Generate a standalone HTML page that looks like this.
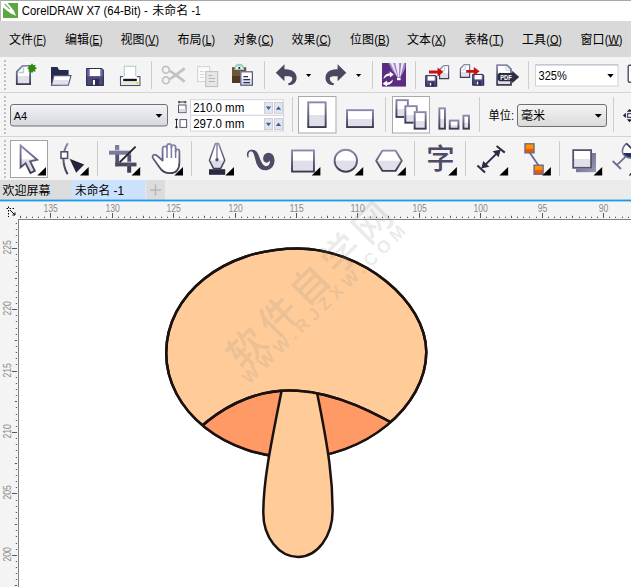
<!DOCTYPE html>
<html lang="zh"><head><meta charset="utf-8"><title>CorelDRAW X7</title>
<style>html,body{margin:0;padding:0;background:#fff;overflow:hidden}svg{display:block}</style></head>
<body><svg width="631" height="587" viewBox="0 0 631 587">
<rect x="0" y="0" width="631" height="587" fill="#ffffff"/>
<rect x="0" y="0" width="631" height="21" fill="#ffffff"/>
<rect x="0" y="0" width="631" height="1" fill="#a8a8a8"/>
<rect x="0" y="0" width="1" height="21" fill="#b8b8b8"/>
<rect x="0" y="21" width="631" height="36" fill="#d9d9d9"/>
<rect x="0" y="57" width="631" height="123" fill="#f4f4f4"/>
<rect x="0" y="92" width="631" height="1" fill="#d4d4d4"/>
<rect x="0" y="136" width="631" height="1" fill="#d4d4d4"/>
<rect x="0" y="180" width="631" height="20" fill="#ebebeb"/>
<rect x="0" y="201" width="631" height="18" fill="#f4f4f4"/>
<rect x="0" y="201" width="18" height="386" fill="#f4f4f4"/>
<rect x="18" y="219" width="613" height="1" fill="#808080"/>
<rect x="18" y="219" width="1" height="368" fill="#808080"/>
<rect x="3" y="3" width="15" height="15" fill="#5aa843"/>
<path d="M3,3 L7.6,3 L10.6,6.8 L13.8,10.6 L16,15.8 L10.8,13.6 L6.8,10.4 L3,7.4 Z" fill="#fff"/>
<path d="M4.6,4.2 L9.6,8.8" stroke="#5aa843" stroke-width="1.1"/>
<text y="15" font-size="12" font-family="Liberation Sans, Noto Sans CJK SC, sans-serif" fill="#000"><tspan x="21.8" textLength="126" lengthAdjust="spacingAndGlyphs">CorelDRAW X7 (64-Bit) -</tspan><tspan x="152.3">未命名</tspan><tspan x="191.6" textLength="9" lengthAdjust="spacingAndGlyphs">-1</tspan></text>
<text y="43.5" font-size="12" font-family="Liberation Sans, Noto Sans CJK SC, sans-serif" fill="#000"><tspan x="9">文件</tspan><tspan x="33.3" font-size="12.4" textLength="12.7" lengthAdjust="spacingAndGlyphs">(<tspan text-decoration="underline">F</tspan>)</tspan></text>
<text y="43.5" font-size="12" font-family="Liberation Sans, Noto Sans CJK SC, sans-serif" fill="#000"><tspan x="65">编辑</tspan><tspan x="89.3" font-size="12.4" textLength="13.2" lengthAdjust="spacingAndGlyphs">(<tspan text-decoration="underline">E</tspan>)</tspan></text>
<text y="43.5" font-size="12" font-family="Liberation Sans, Noto Sans CJK SC, sans-serif" fill="#000"><tspan x="120.5">视图</tspan><tspan x="144.8" font-size="12.4" textLength="14.2" lengthAdjust="spacingAndGlyphs">(<tspan text-decoration="underline">V</tspan>)</tspan></text>
<text y="43.5" font-size="12" font-family="Liberation Sans, Noto Sans CJK SC, sans-serif" fill="#000"><tspan x="177.5">布局</tspan><tspan x="201.8" font-size="12.4" textLength="13.2" lengthAdjust="spacingAndGlyphs">(<tspan text-decoration="underline">L</tspan>)</tspan></text>
<text y="43.5" font-size="12" font-family="Liberation Sans, Noto Sans CJK SC, sans-serif" fill="#000"><tspan x="233.5">对象</tspan><tspan x="257.8" font-size="12.4" textLength="15.7" lengthAdjust="spacingAndGlyphs">(<tspan text-decoration="underline">C</tspan>)</tspan></text>
<text y="43.5" font-size="12" font-family="Liberation Sans, Noto Sans CJK SC, sans-serif" fill="#000"><tspan x="291.5">效果</tspan><tspan x="315.8" font-size="12.4" textLength="15.2" lengthAdjust="spacingAndGlyphs">(<tspan text-decoration="underline">C</tspan>)</tspan></text>
<text y="43.5" font-size="12" font-family="Liberation Sans, Noto Sans CJK SC, sans-serif" fill="#000"><tspan x="350">位图</tspan><tspan x="374.3" font-size="12.4" textLength="15.2" lengthAdjust="spacingAndGlyphs">(<tspan text-decoration="underline">B</tspan>)</tspan></text>
<text y="43.5" font-size="12" font-family="Liberation Sans, Noto Sans CJK SC, sans-serif" fill="#000"><tspan x="407">文本</tspan><tspan x="431.3" font-size="12.4" textLength="14.7" lengthAdjust="spacingAndGlyphs">(<tspan text-decoration="underline">X</tspan>)</tspan></text>
<text y="43.5" font-size="12" font-family="Liberation Sans, Noto Sans CJK SC, sans-serif" fill="#000"><tspan x="464.5">表格</tspan><tspan x="488.8" font-size="12.4" textLength="14.7" lengthAdjust="spacingAndGlyphs">(<tspan text-decoration="underline">T</tspan>)</tspan></text>
<text y="43.5" font-size="12" font-family="Liberation Sans, Noto Sans CJK SC, sans-serif" fill="#000"><tspan x="522">工具</tspan><tspan x="546.3" font-size="12.4" textLength="15.7" lengthAdjust="spacingAndGlyphs">(<tspan text-decoration="underline">O</tspan>)</tspan></text>
<text y="43.5" font-size="12" font-family="Liberation Sans, Noto Sans CJK SC, sans-serif" fill="#000"><tspan x="580.5">窗口</tspan><tspan x="604.8" font-size="12.4" textLength="17.7" lengthAdjust="spacingAndGlyphs">(<tspan text-decoration="underline">W</tspan>)</tspan></text>
<defs>
<linearGradient id="gO" x1="0" y1="0" x2="0" y2="1"><stop offset="0" stop-color="#8a89ae"/><stop offset="1" stop-color="#3c3b50"/></linearGradient>
<linearGradient id="gDD" x1="0" y1="0" x2="0" y2="1"><stop offset="0" stop-color="#f4f4f4"/><stop offset="1" stop-color="#dadada"/></linearGradient>
<linearGradient id="gDD2" x1="0" y1="0" x2="0" y2="1"><stop offset="0" stop-color="#f4f5f8"/><stop offset="0.5" stop-color="#e3e5ea"/><stop offset="1" stop-color="#d6d8de"/></linearGradient>
<linearGradient id="gOr" x1="0" y1="0" x2="0" y2="1"><stop offset="0" stop-color="#ff9a00"/><stop offset="0.55" stop-color="#ff8a00"/><stop offset="0.56" stop-color="#f25a00"/><stop offset="1" stop-color="#f05000"/></linearGradient>
<linearGradient id="gSh" x1="0" y1="0" x2="1" y2="1"><stop offset="0" stop-color="#5a5a80"/><stop offset="1" stop-color="#9a9ab8"/></linearGradient>
<filter id="blur1" x="-20%" y="-20%" width="140%" height="140%"><feGaussianBlur stdDeviation="0.7"/></filter>
</defs>
<rect x="4" y="60" width="2" height="2" fill="#d2d2d2"/><rect x="4" y="61" width="1" height="1" fill="#a6a6a6"/><rect x="5" y="60" width="1" height="1" fill="#bcbcbc"/>
<rect x="4" y="64" width="2" height="2" fill="#d2d2d2"/><rect x="4" y="65" width="1" height="1" fill="#a6a6a6"/><rect x="5" y="64" width="1" height="1" fill="#bcbcbc"/>
<rect x="4" y="68" width="2" height="2" fill="#d2d2d2"/><rect x="4" y="69" width="1" height="1" fill="#a6a6a6"/><rect x="5" y="68" width="1" height="1" fill="#bcbcbc"/>
<rect x="4" y="72" width="2" height="2" fill="#d2d2d2"/><rect x="4" y="73" width="1" height="1" fill="#a6a6a6"/><rect x="5" y="72" width="1" height="1" fill="#bcbcbc"/>
<rect x="4" y="76" width="2" height="2" fill="#d2d2d2"/><rect x="4" y="77" width="1" height="1" fill="#a6a6a6"/><rect x="5" y="76" width="1" height="1" fill="#bcbcbc"/>
<rect x="4" y="80" width="2" height="2" fill="#d2d2d2"/><rect x="4" y="81" width="1" height="1" fill="#a6a6a6"/><rect x="5" y="80" width="1" height="1" fill="#bcbcbc"/>
<rect x="4" y="84" width="2" height="2" fill="#d2d2d2"/><rect x="4" y="85" width="1" height="1" fill="#a6a6a6"/><rect x="5" y="84" width="1" height="1" fill="#bcbcbc"/>
<rect x="4" y="88" width="2" height="2" fill="#d2d2d2"/><rect x="4" y="89" width="1" height="1" fill="#a6a6a6"/><rect x="5" y="88" width="1" height="1" fill="#bcbcbc"/>
<path d="M22.5,65.8 L30.2,65.8 L30.2,84.3 L16.7,84.3 L16.7,71.6 Z" fill="#fff"/>
<rect x="16.7" y="76" width="13.5" height="8.3" fill="#e0e0ea"/>
<path d="M23.4,67.4 L23.4,72.4 L18.4,72.4" fill="none" stroke="#b4d2cd" stroke-width="1.5"/>
<path d="M22.5,65.9 L30.1,65.9 L30.1,84.2 L16.8,84.2 L16.8,71.6 Z" fill="none" stroke="url(#gO)" stroke-width="1.8"/>
<polygon points="32.00,63.20 33.26,65.15 35.54,64.66 35.05,66.94 37.00,68.20 35.05,69.46 35.54,71.74 33.26,71.25 32.00,73.20 30.74,71.25 28.46,71.74 28.95,69.46 27.00,68.20 28.95,66.94 28.46,64.66 30.74,65.15" fill="#2d8c0c"/>
<path d="M51,67 L57.6,67 L58.8,70 L68.6,70 L68.6,76 L51,85.6 Z" fill="#252c52"/>
<path d="M51,67 L51,85.6 L60,85.6 L60,70 Z" fill="#252c52"/>
<path d="M54,75.6 L71,75.6 L68.4,85.3 L51.4,85.3 Z" fill="#fff"/>
<path d="M52.8,80 L69.8,80 L68.4,85.3 L51.4,85.3 Z" fill="#e0e0ea"/>
<path d="M54,75.6 L71,75.6 L68.4,85.3 L51.4,85.3 Z" fill="none" stroke="#55557a" stroke-width="1.1"/>
<path d="M86.2,68 L101.68800000000002,68 L103.80000000000001,70.112 L103.80000000000001,85.8 L86.2,85.8 Z" fill="#6a68a6"/>
<path d="M86.2,76.366 L103.80000000000001,76.366 L103.80000000000001,85.8 L86.2,85.8 Z" fill="#4b4a78"/>
<rect x="89.72" y="68.6" width="10.56" height="7.476" fill="#fff"/>
<rect x="91.83200000000001" y="79.036" width="7.040000000000001" height="6.764" fill="#2a2c52"/>
<rect x="92.888" y="79.926" width="2.112" height="5.34" fill="#fff"/>
<path d="M86.7,68.5 L101.68800000000002,68.5 L103.30000000000001,70.112 L103.30000000000001,85.3 L86.7,85.3 Z" fill="none" stroke="#2a2c52" stroke-width="1"/>
<rect x="124.3" y="66.3" width="11.4" height="12" fill="#fff" stroke="#a9cfc9" stroke-width="1"/>
<rect x="120.5" y="76.6" width="19.4" height="8.9" fill="#fff" stroke="#4b4a7c" stroke-width="1.1"/>
<rect x="123.2" y="76" width="13.6" height="3" fill="#fff"/>
<rect x="123.2" y="78.8" width="13.6" height="2.4" fill="#15151f"/>
<rect x="121.2" y="81.6" width="18" height="3.3" fill="#e9e9cd"/>
<rect x="136.4" y="82" width="1.8" height="1.8" fill="#f2d400"/>
<rect x="151" y="61" width="1" height="28" fill="#cdcdcd"/>
<g fill="none" stroke="#c2c2c2" stroke-width="1.7"><circle cx="165.9" cy="69.8" r="3.4"/><circle cx="165.9" cy="80.3" r="3.4"/></g>
<path d="M168.4,78.6 L173,75.6 L183.8,67.2 L185.6,69.6 L175.4,77 L169.8,80.6 Z" fill="#c2c2c2"/>
<path d="M168.4,71.4 L173,74.4 L183.8,82.8 L185.6,80.4 L175.4,73 L169.8,69.4 Z" fill="#c2c2c2"/>
<rect x="197.7" y="66.6" width="12" height="15" fill="#fbfbfb" stroke="#d2d2d2" stroke-width="1"/>
<path d="M200,71.5h4 M200,74.5h4 M200,77.5h4" stroke="#d6d6d6" stroke-width="1"/>
<rect x="205.7" y="71.6" width="12" height="15" fill="#e6e6e6" stroke="#bcbcbc" stroke-width="1"/>
<path d="M208.5,75.5h4 M208.5,78.5h6.5 M208.5,81.5h6.5" stroke="#b4b4b4" stroke-width="1"/>
<path d="M235,69 Q235,64.4 239.3,64.4 Q243.6,64.4 243.6,69 Z" fill="#fff" stroke="#9ccdc4" stroke-width="1.2"/>
<rect x="232" y="67.2" width="14.2" height="8" fill="#6b5637"/>
<rect x="232" y="75.2" width="14.2" height="7.8" fill="#4e3921"/>
<path d="M235,69.4 Q235,65.6 239.3,65.6 Q243.6,65.6 243.6,69.4 Z" fill="#fff" stroke="#9ccdc4" stroke-width="1.2"/>
<rect x="238.4" y="67" width="1.8" height="1.8" fill="#1a1a30"/>
<rect x="240.2" y="71.2" width="12.800000000000011" height="14.599999999999994" fill="#fff"/>
<rect x="240.2" y="78.5" width="12.800000000000011" height="7.299999999999997" fill="#e0e0ea"/>
<rect x="240.79999999999998" y="71.8" width="11.600000000000012" height="13.399999999999995" fill="none" stroke="#55557c" stroke-width="1.2"/>
<path d="M243.4,76.6h4.6 M243.4,79.6h6.6 M243.4,82.6h6.6" stroke="#2a2c52" stroke-width="1.3"/>
<rect x="264" y="61" width="1" height="28" fill="#cdcdcd"/>
<path d="M275.8,72.8 L284.5,64.3 L284.5,69.2 C292.5,68.8 296.6,72.6 296.6,77.8 C296.6,82.6 293,85.3 288.6,85.3 L288,83.6 C290.8,82.6 292.3,80.8 292.3,78.8 C292.3,76.4 290,76.2 284.5,76.3 L284.5,81.3 Z" fill="#4a485f"/>
<path d="M275.8,72.8 L284.5,64.3 L284.5,69.2 C292.5,68.8 296.6,72.6 296.6,77.8 C296.6,82.6 293,85.3 288.6,85.3 L288,83.6 C290.8,82.6 292.3,80.8 292.3,78.8 C292.3,76.4 290,76.2 284.5,76.3 L284.5,81.3 Z" fill="#4a485f" transform="translate(622.1,0) scale(-1,1)"/>
<path d="M306,74 L311.2,74 L308.6,77 Z" fill="#000"/>
<path d="M356,74 L361.2,74 L358.6,77 Z" fill="#000"/>
<rect x="372" y="61" width="1" height="28" fill="#cdcdcd"/>
<rect x="382" y="63" width="24" height="23.6" fill="#5a2d82"/>
<clipPath id="pc"><rect x="382" y="63" width="24" height="23.6"/></clipPath>
<g clip-path="url(#pc)"><path d="M388.5,63 L405.5,63 Q406,70 400.2,77 L397.2,77 Q391,70 388.5,63 Z" fill="#9f86c2"/><path d="M390.5,63 L393.2,63 L397.6,77 L397.2,77 Z M395.2,63 L399.2,63 L399,77 L398.3,77 Z M401.4,63 L404,63 L400.2,77 L399.6,77 Z" fill="#efe8f6"/><rect x="397" y="77.6" width="3.6" height="2.6" fill="#fff"/><path d="M383.4,79 Q384,73.6 389.8,73.2 L389.6,71.2 L393.8,74.4 L390,77.6 L389.9,75.6 Q386,75.8 383.4,79 Z" fill="#fff"/><path d="M393,79.6 Q392.4,84.6 387,85 L387.2,86.6 L382.6,83.8 L386.8,80.6 L386.9,82.6 Q390.4,82.4 393,79.6 Z" fill="#fff"/></g>
<rect x="415" y="61" width="1" height="28" fill="#cdcdcd"/>
<path d="M425.3,75.2 L435.684,75.2 L437.1,76.616 L437.1,86.60000000000001 L425.3,86.60000000000001 Z" fill="#6a68a6"/>
<path d="M425.3,80.558 L437.1,80.558 L437.1,86.60000000000001 L425.3,86.60000000000001 Z" fill="#4b4a78"/>
<rect x="427.66" y="75.8" width="7.08" height="4.788" fill="#fff"/>
<rect x="429.076" y="82.268" width="4.720000000000001" height="4.332" fill="#2a2c52"/>
<rect x="429.784" y="82.83800000000001" width="1.416" height="3.42" fill="#fff"/>
<path d="M425.8,75.7 L435.684,75.7 L436.6,76.616 L436.6,86.10000000000001 L425.8,86.10000000000001 Z" fill="none" stroke="#2a2c52" stroke-width="1"/>
<path d="M443.6,65.6 L448.6,65.6 L448.6,78.6 L439.6,78.6 L439.6,69.8 Z" fill="#fff"/>
<rect x="439.6" y="73" width="9" height="5.6" fill="#e0e0ea"/>
<path d="M444.6,66.6 L444.6,70.8 L440.6,70.8" fill="none" stroke="#b4d2cd" stroke-width="1"/>
<path d="M443.6,65.6 L448.6,65.6 L448.6,78.6 L439.6,78.6 L439.6,69.8 Z" fill="none" stroke="url(#gO)" stroke-width="1.2"/>
<path d="M429,70.6 L437.6,70.6 L437.6,67.6 L443.4,72 L437.6,76.4 L437.6,73.5 L429,73.5 Z" fill="#c8100e"/>
<path d="M464.2,64.6 L469.6,64.6 L469.6,77.4 L460.4,77.4 L460.4,68.6 Z" fill="#fff"/>
<rect x="460.4" y="72" width="9.2" height="5.4" fill="#e0e0ea"/>
<path d="M465.2,65.6 L465.2,69.8 L461.4,69.8" fill="none" stroke="#b4d2cd" stroke-width="1"/>
<path d="M464.2,64.6 L469.6,64.6 L469.6,77.4 L460.4,77.4 L460.4,68.6 Z" fill="none" stroke="url(#gO)" stroke-width="1.2"/>
<path d="M472.3,73.9 L482.684,73.9 L484.1,75.316 L484.1,85.5 L472.3,85.5 Z" fill="#6a68a6"/>
<path d="M472.3,79.352 L484.1,79.352 L484.1,85.5 L472.3,85.5 Z" fill="#4b4a78"/>
<rect x="474.66" y="74.5" width="7.08" height="4.872" fill="#fff"/>
<rect x="476.076" y="81.09200000000001" width="4.720000000000001" height="4.4079999999999995" fill="#2a2c52"/>
<rect x="476.784" y="81.67200000000001" width="1.416" height="3.48" fill="#fff"/>
<path d="M472.8,74.4 L482.684,74.4 L483.6,75.316 L483.6,85.0 L472.8,85.0 Z" fill="none" stroke="#2a2c52" stroke-width="1"/>
<path d="M466.2,69.9 L473.8,69.9 L473.8,66.9 L479.6,71.3 L473.8,75.7 L473.8,72.8 L466.2,72.8 Z" fill="#c8100e"/>
<path d="M496.9,64.9 L507,64.9 L511.2,69.2 L511.2,85 L496.9,85 Z" fill="#fff"/>
<rect x="496.9" y="76" width="14.3" height="9" fill="#e0e0ea"/>
<path d="M506,66 L506,70.2 L510.2,70.2" fill="none" stroke="#b4d2cd" stroke-width="1"/>
<path d="M497.1,65.1 L507,65.1 L511,69.2 L511,84.8 L497.1,84.8 Z" fill="none" stroke="url(#gO)" stroke-width="1.8"/>
<path d="M497.4,77 Q497.6,72.4 501,72.9 L512.2,72.9 L512.2,70.8 L519.2,77 L512.2,83.2 L512.2,81.3 L501,81.3 Q497.6,81.6 497.4,77 Z" fill="#2e2c44"/>
<text x="500.2" y="80.2" font-size="7.6" font-weight="bold" font-family="Liberation Sans, Noto Sans CJK SC, sans-serif" fill="#fff" textLength="11.6" lengthAdjust="spacingAndGlyphs">PDF</text>
<rect x="528" y="61" width="1" height="28" fill="#cdcdcd"/>
<rect x="535.5" y="64.5" width="82.5" height="21.5" fill="#fff" stroke="#d0d2dc" stroke-width="1"/>
<rect x="535.5" y="64.5" width="82.5" height="1" fill="#b8bac8"/>
<text x="538.6" y="80" font-size="12" font-family="Liberation Sans, Noto Sans CJK SC, sans-serif" fill="#000" textLength="28.2" lengthAdjust="spacingAndGlyphs">325%</text>
<path d="M607.3,74 L613.7,74 L610.5,77.8 Z" fill="#000"/>
<rect x="628.2" y="65.2" width="8" height="17" rx="1.5" fill="#fff" stroke="#4a4a6a" stroke-width="1.4"/>
<rect x="4" y="96" width="2" height="2" fill="#d2d2d2"/><rect x="4" y="97" width="1" height="1" fill="#a6a6a6"/><rect x="5" y="96" width="1" height="1" fill="#bcbcbc"/>
<rect x="4" y="100" width="2" height="2" fill="#d2d2d2"/><rect x="4" y="101" width="1" height="1" fill="#a6a6a6"/><rect x="5" y="100" width="1" height="1" fill="#bcbcbc"/>
<rect x="4" y="104" width="2" height="2" fill="#d2d2d2"/><rect x="4" y="105" width="1" height="1" fill="#a6a6a6"/><rect x="5" y="104" width="1" height="1" fill="#bcbcbc"/>
<rect x="4" y="108" width="2" height="2" fill="#d2d2d2"/><rect x="4" y="109" width="1" height="1" fill="#a6a6a6"/><rect x="5" y="108" width="1" height="1" fill="#bcbcbc"/>
<rect x="4" y="112" width="2" height="2" fill="#d2d2d2"/><rect x="4" y="113" width="1" height="1" fill="#a6a6a6"/><rect x="5" y="112" width="1" height="1" fill="#bcbcbc"/>
<rect x="4" y="116" width="2" height="2" fill="#d2d2d2"/><rect x="4" y="117" width="1" height="1" fill="#a6a6a6"/><rect x="5" y="116" width="1" height="1" fill="#bcbcbc"/>
<rect x="4" y="120" width="2" height="2" fill="#d2d2d2"/><rect x="4" y="121" width="1" height="1" fill="#a6a6a6"/><rect x="5" y="120" width="1" height="1" fill="#bcbcbc"/>
<rect x="4" y="124" width="2" height="2" fill="#d2d2d2"/><rect x="4" y="125" width="1" height="1" fill="#a6a6a6"/><rect x="5" y="124" width="1" height="1" fill="#bcbcbc"/>
<rect x="4" y="128" width="2" height="2" fill="#d2d2d2"/><rect x="4" y="129" width="1" height="1" fill="#a6a6a6"/><rect x="5" y="128" width="1" height="1" fill="#bcbcbc"/>
<rect x="4" y="132" width="2" height="2" fill="#d2d2d2"/><rect x="4" y="133" width="1" height="1" fill="#a6a6a6"/><rect x="5" y="132" width="1" height="1" fill="#bcbcbc"/>
<rect x="10.5" y="104.5" width="157" height="21.5" rx="2.5" fill="url(#gDD2)" stroke="#707070" stroke-width="1"/>
<text x="13.8" y="119.8" font-size="11.6" font-family="Liberation Sans, Noto Sans CJK SC, sans-serif" fill="#000" textLength="13.4" lengthAdjust="spacingAndGlyphs">A4</text>
<path d="M155.6,114 L162.4,114 L159,117.8 Z" fill="#000"/>
<path d="M178,102h8.4 M179.2,101v2.4 M185.2,101v2.4" stroke="#2a2a3a" stroke-width="1"/>
<rect x="178.5" y="105" width="7.5" height="7.6" fill="#fff" stroke="#55556a" stroke-width="1"/>
<rect x="179" y="109" width="6.5" height="3.2" fill="#dcdce8"/>
<path d="M176.5,118.6v9.6 M175,119.6h3 M175,127.2h3" stroke="#2a2a3a" stroke-width="1"/>
<rect x="180" y="119.6" width="6.6" height="7.8" fill="#fff" stroke="#55556a" stroke-width="1"/>
<rect x="190.5" y="99.7" width="93" height="15.6" fill="#fff" stroke="#d4d6de" stroke-width="1"/>
<text x="193.2" y="112" font-size="12" font-family="Liberation Sans, Noto Sans CJK SC, sans-serif" fill="#000" textLength="51" lengthAdjust="spacingAndGlyphs">210.0 mm</text>
<rect x="190.5" y="115.4" width="93" height="15.6" fill="#fff" stroke="#d4d6de" stroke-width="1"/>
<text x="193.2" y="128" font-size="12" font-family="Liberation Sans, Noto Sans CJK SC, sans-serif" fill="#000" textLength="51" lengthAdjust="spacingAndGlyphs">297.0 mm</text>
<rect x="264.5" y="102.3" width="8" height="11" fill="#e4e5ea" stroke="#c4c6d0" stroke-width="0.8"/>
<rect x="274.5" y="102.3" width="8" height="11" fill="#e4e5ea" stroke="#c4c6d0" stroke-width="0.8"/>
<path d="M265.9,106.5 L271.1,106.5 L268.5,109.89999999999999 Z" fill="#3b5cb0"/>
<path d="M275.9,109.7 L281.1,109.7 L278.5,106.3 Z" fill="#3b5cb0"/>
<rect x="264.5" y="118.6" width="8" height="11" fill="#e4e5ea" stroke="#c4c6d0" stroke-width="0.8"/>
<rect x="274.5" y="118.6" width="8" height="11" fill="#e4e5ea" stroke="#c4c6d0" stroke-width="0.8"/>
<path d="M265.9,122.8 L271.1,122.8 L268.5,126.19999999999999 Z" fill="#3b5cb0"/>
<path d="M275.9,126.0 L281.1,126.0 L278.5,122.6 Z" fill="#3b5cb0"/>
<rect x="292" y="97" width="1" height="35" fill="#cdcdcd"/>
<rect x="298.5" y="96.5" width="37.5" height="36.5" fill="#fff" stroke="#a9a9a9" stroke-width="1"/>
<rect x="307.3" y="101.4" width="19.30000000000001" height="26.599999999999994" fill="#fff"/>
<rect x="307.3" y="115" width="19.30000000000001" height="13" fill="#e0e0ea"/>
<rect x="308.25" y="102.35000000000001" width="17.400000000000013" height="24.699999999999996" fill="none" stroke="url(#gO)" stroke-width="1.9"/>
<rect x="346.1" y="109.2" width="27.799999999999955" height="18.799999999999997" fill="#fff"/>
<rect x="346.1" y="119" width="27.799999999999955" height="9" fill="#e0e0ea"/>
<rect x="347.05" y="110.15" width="25.899999999999956" height="16.9" fill="none" stroke="url(#gO)" stroke-width="1.9"/>
<rect x="385" y="97" width="1" height="35" fill="#cdcdcd"/>
<rect x="392.5" y="96.5" width="37" height="36.5" fill="#fff" stroke="#a9a9a9" stroke-width="1"/>
<rect x="395.5" y="99.2" width="13.300000000000011" height="18.700000000000003" fill="#fff"/>
<rect x="395.5" y="109" width="13.300000000000011" height="8.900000000000006" fill="#e0e0ea"/>
<rect x="396.45" y="100.15" width="11.400000000000011" height="16.800000000000004" fill="none" stroke="url(#gO)" stroke-width="1.9"/>
<rect x="404.4" y="105.2" width="13.300000000000011" height="18.39999999999999" fill="#fff"/>
<rect x="404.4" y="115" width="13.300000000000011" height="8.599999999999994" fill="#e0e0ea"/>
<rect x="405.34999999999997" y="106.15" width="11.400000000000011" height="16.499999999999993" fill="none" stroke="url(#gO)" stroke-width="1.9"/>
<rect x="413.7" y="111.2" width="12.900000000000034" height="18.39999999999999" fill="#fff"/>
<rect x="413.7" y="121" width="12.900000000000034" height="8.599999999999994" fill="#e0e0ea"/>
<rect x="414.65" y="112.15" width="11.000000000000034" height="16.499999999999993" fill="none" stroke="url(#gO)" stroke-width="1.9"/>
<rect x="438.4" y="107.4" width="7.5" height="22.19999999999999" fill="#fff"/>
<rect x="438.4" y="119" width="7.5" height="10.599999999999994" fill="#e0e0ea"/>
<rect x="439.34999999999997" y="108.35000000000001" width="5.6" height="20.29999999999999" fill="none" stroke="url(#gO)" stroke-width="1.9"/>
<rect x="448.8" y="119.6" width="10.599999999999966" height="10.0" fill="#fff"/>
<rect x="448.8" y="125" width="10.599999999999966" height="4.599999999999994" fill="#e0e0ea"/>
<rect x="449.75" y="120.55" width="8.699999999999966" height="8.1" fill="none" stroke="url(#gO)" stroke-width="1.9"/>
<rect x="462.5" y="114.7" width="7.399999999999977" height="14.899999999999991" fill="#fff"/>
<rect x="462.5" y="122.5" width="7.399999999999977" height="7.099999999999994" fill="#e0e0ea"/>
<rect x="463.45" y="115.65" width="5.499999999999977" height="12.999999999999991" fill="none" stroke="url(#gO)" stroke-width="1.9"/>
<rect x="479" y="97" width="1" height="35" fill="#cdcdcd"/>
<text x="488.6" y="120" font-size="12" font-family="Liberation Sans, Noto Sans CJK SC, sans-serif" fill="#000" textLength="25.6" lengthAdjust="spacingAndGlyphs">单位:</text>
<rect x="517.5" y="104.5" width="89" height="22" rx="2.5" fill="url(#gDD)" stroke="#707070" stroke-width="1"/>
<text x="521" y="120" font-size="12" font-family="Liberation Sans, Noto Sans CJK SC, sans-serif" fill="#000">毫米</text>
<path d="M594.8,114 L601.9,114 L598.3,117.8 Z" fill="#000"/>
<rect x="613" y="97" width="1" height="35" fill="#cdcdcd"/>
<path d="M622.9,115.4 L625.9,112.8 L625.9,118 Z" fill="#1e1d30"/>
<rect x="627.6" y="113.6" width="8" height="3.8" fill="#fff" stroke="#4a4a6a" stroke-width="1.3"/>
<path d="M629.6,108.9 L626.8,111.7 L632.4,111.7 Z M629.6,122.2 L626.8,119.2 L632.4,119.2 Z" fill="#1e1d30"/>
<rect x="4" y="140" width="2" height="2" fill="#d2d2d2"/><rect x="4" y="141" width="1" height="1" fill="#a6a6a6"/><rect x="5" y="140" width="1" height="1" fill="#bcbcbc"/>
<rect x="4" y="144" width="2" height="2" fill="#d2d2d2"/><rect x="4" y="145" width="1" height="1" fill="#a6a6a6"/><rect x="5" y="144" width="1" height="1" fill="#bcbcbc"/>
<rect x="4" y="148" width="2" height="2" fill="#d2d2d2"/><rect x="4" y="149" width="1" height="1" fill="#a6a6a6"/><rect x="5" y="148" width="1" height="1" fill="#bcbcbc"/>
<rect x="4" y="152" width="2" height="2" fill="#d2d2d2"/><rect x="4" y="153" width="1" height="1" fill="#a6a6a6"/><rect x="5" y="152" width="1" height="1" fill="#bcbcbc"/>
<rect x="4" y="156" width="2" height="2" fill="#d2d2d2"/><rect x="4" y="157" width="1" height="1" fill="#a6a6a6"/><rect x="5" y="156" width="1" height="1" fill="#bcbcbc"/>
<rect x="4" y="160" width="2" height="2" fill="#d2d2d2"/><rect x="4" y="161" width="1" height="1" fill="#a6a6a6"/><rect x="5" y="160" width="1" height="1" fill="#bcbcbc"/>
<rect x="4" y="164" width="2" height="2" fill="#d2d2d2"/><rect x="4" y="165" width="1" height="1" fill="#a6a6a6"/><rect x="5" y="164" width="1" height="1" fill="#bcbcbc"/>
<rect x="4" y="168" width="2" height="2" fill="#d2d2d2"/><rect x="4" y="169" width="1" height="1" fill="#a6a6a6"/><rect x="5" y="168" width="1" height="1" fill="#bcbcbc"/>
<rect x="4" y="172" width="2" height="2" fill="#d2d2d2"/><rect x="4" y="173" width="1" height="1" fill="#a6a6a6"/><rect x="5" y="172" width="1" height="1" fill="#bcbcbc"/>
<rect x="4" y="176" width="2" height="2" fill="#d2d2d2"/><rect x="4" y="177" width="1" height="1" fill="#a6a6a6"/><rect x="5" y="176" width="1" height="1" fill="#bcbcbc"/>
<rect x="10.5" y="140.5" width="37" height="37" fill="#fff" stroke="#a4a4a4" stroke-width="1"/>
<path d="M20.6,145.6 L20.6,167.2 L25.6,163.2 L30.4,173 L34.8,170.8 L30.2,161.4 L37.2,159.8 Z" fill="#fff"/>
<clipPath id="arwc"><path d="M20.6,145.6 L20.6,167.2 L25.6,163.2 L30.4,173 L34.8,170.8 L30.2,161.4 L37.2,159.8 Z"/></clipPath>
<rect x="20" y="159.4" width="18" height="14" fill="#dcdce8" clip-path="url(#arwc)"/>
<path d="M20.6,145.6 L20.6,167.2 L25.6,163.2 L30.4,173 L34.8,170.8 L30.2,161.4 L37.2,159.8 Z" fill="none" stroke="url(#gO)" stroke-width="1.9" stroke-linejoin="miter"/>
<path d="M46,166.9 L46,175.6 L37.3,175.6 Z" fill="#000"/>
<path d="M67.8,143.2 Q63.4,150 63.4,158.6 Q63.4,167 67.6,174.2" fill="none" stroke="url(#gO)" stroke-width="2"/>
<rect x="61" y="151.8" width="6.6" height="6.6" fill="#fff" stroke="#4a4a62" stroke-width="1.5"/>
<path d="M69.6,158.8 L84.2,164.6 L76.2,172.8 Z" fill="#25243c"/>
<path d="M88.7,166.9 L88.7,175.6 L80.0,175.6 Z" fill="#000"/>
<rect x="97" y="141" width="1" height="35" fill="#cdcdcd"/>
<rect x="115.3" y="145.2" width="3.8" height="21" fill="#55536c"/>
<rect x="115.3" y="145.2" width="3.8" height="5.5" fill="#7e7d9e"/>
<rect x="115.3" y="162.6" width="21.2" height="3.8" fill="#4b4960"/>
<rect x="109" y="150.7" width="22.1" height="4" fill="#7a799a"/>
<rect x="127.4" y="154.7" width="3.7" height="17.8" fill="#55536c"/>
<rect x="127.4" y="166.4" width="3.7" height="6.1" fill="#3e3d52"/>
<rect x="115.3" y="149.8" width="3.8" height="1" fill="#a8d4cc"/><rect x="127.4" y="161.6" width="3.7" height="1" fill="#a8d4cc"/>
<path d="M135.6,146.6 L119.6,162.4" stroke="#1e1d2c" stroke-width="1.8"/>
<path d="M140.2,166.9 L140.2,175.6 L131.5,175.6 Z" fill="#000"/>
<path d="M162.6,160.6 L162.6,148.6 Q162.6,146.4 164.8,146.4 Q167,146.4 167,148.6 L167,146.2 Q167,144 169.2,144 Q171.4,144 171.4,146.2 L171.4,147.4 Q171.4,145.2 173.5,145.2 Q175.6,145.2 175.6,147.4 L175.6,151.4 Q175.6,149.4 177.5,149.4 Q179.4,149.4 179.4,151.6 L179.4,162 Q179.4,173.2 170,173.2 Q163.4,173.2 159.6,167.4 L153.2,158.4 Q151.8,156 153.6,155 Q155.6,154.2 157.4,156 Z" fill="#fff" stroke="url(#gO)" stroke-width="1.8" stroke-linejoin="round"/>
<path d="M167,148.4 V158 M171.4,147 V158 M175.6,151 V158" stroke="#7a7a9c" stroke-width="1.5" fill="none"/>
<path d="M183,166.9 L183,175.6 L174.3,175.6 Z" fill="#000"/>
<rect x="191" y="141" width="1" height="35" fill="#cdcdcd"/>
<path d="M215.4,143.4 L218.6,143.4 L224.8,160.4 L220.6,168.6 L213.6,168.6 L209.4,160.4 Z" fill="#fff"/>
<path d="M209.6,160.4 L224.6,160.4 L220.6,168.6 L213.6,168.6 Z" fill="#dcdce8"/>
<path d="M215.4,143.4 L218.6,143.4 L224.8,160.4 L220.6,168.6 L213.6,168.6 L209.4,160.4 Z" fill="none" stroke="url(#gO)" stroke-width="1.5" stroke-linejoin="round"/>
<path d="M217,144 V159" stroke="#6a6a8c" stroke-width="1.2"/><circle cx="217" cy="159.8" r="1.7" fill="#55546e"/>
<rect x="209" y="169.2" width="16.2" height="5.6" fill="#2a2940"/>
<path d="M234,166.9 L234,175.6 L225.3,175.6 Z" fill="#000"/>
<path d="M247.6,157.6 Q245.2,151.6 250.6,149.8 Q256.4,148.8 258.8,155.4 Q260.6,161 262.6,164 Q265,167.4 268.2,165.4 Q270.6,163.4 269.6,160.6 Q268.6,163 266,162.6 Q262.8,161.6 263.2,157.6 Q264,153 268.6,152.8 Q274.4,153.6 274.6,160.6 Q274.2,168.6 267,170.2 Q259.6,171 256.4,163.4 Q255.2,158.6 254.2,155.4 Q252.8,150.8 250.2,151.4 Q247.6,152.6 248.8,157.2 Z" fill="#4e4c64"/>
<rect x="291.1" y="149.5" width="23.799999999999955" height="23.0" fill="#fff"/>
<rect x="291.1" y="160.6" width="23.799999999999955" height="11.900000000000006" fill="#e0e0ea"/>
<rect x="292.05" y="150.45" width="21.899999999999956" height="21.1" fill="none" stroke="url(#gO)" stroke-width="1.9"/>
<path d="M320.4,166.9 L320.4,175.6 L311.7,175.6 Z" fill="#000"/>
<clipPath id="ec"><ellipse cx="345.8" cy="160.7" rx="11.2" ry="11"/></clipPath>
<ellipse cx="345.8" cy="160.7" rx="11.2" ry="11" fill="#fff"/>
<rect x="334" y="160.6" width="24" height="12" fill="#e0e0ea" clip-path="url(#ec)"/>
<ellipse cx="345.8" cy="160.7" rx="11.2" ry="11" fill="none" stroke="url(#gO)" stroke-width="1.9"/>
<path d="M363.2,166.9 L363.2,175.6 L354.5,175.6 Z" fill="#000"/>
<path d="M376.2,160.7 L382.5,150.6 L395.5,150.6 L401.8,160.7 L395.5,170.9 L382.5,170.9 Z" fill="#fff"/>
<path d="M376.2,160.7 L401.8,160.7 L395.5,170.9 L382.5,170.9 Z" fill="#e0e0ea"/>
<path d="M376.2,160.7 L382.5,150.6 L395.5,150.6 L401.8,160.7 L395.5,170.9 L382.5,170.9 Z" fill="none" stroke="url(#gO)" stroke-width="1.9" stroke-linejoin="round"/>
<path d="M405.9,166.9 L405.9,175.6 L397.2,175.6 Z" fill="#000"/>
<rect x="414" y="141" width="1" height="35" fill="#cdcdcd"/>
<text x="426.2" y="169.2" font-size="28.4" font-weight="500" font-family="Liberation Sans, Noto Sans CJK SC, sans-serif" fill="#4e4c64">字</text>
<path d="M456.9,166.9 L456.9,175.6 L448.2,175.6 Z" fill="#000"/>
<rect x="465" y="141" width="1" height="35" fill="#cdcdcd"/>
<g stroke="#2e2c44" stroke-width="2" fill="none"><path d="M483.4,166.6 L498.6,151.6"/><path d="M477.4,165.4 L485,172.4"/><path d="M496.6,146 L504.8,152.6"/></g>
<path d="M481.2,168.6 L483.2,161 L489.4,166.8 Z" fill="#2e2c44"/><path d="M500.8,149.6 L498.6,157.2 L492.6,151.2 Z" fill="#2e2c44"/>
<path d="M508.1,166.9 L508.1,175.6 L499.40000000000003,175.6 Z" fill="#000"/>
<path d="M529.6,152.6 L538.6,165.4" stroke="#6a6a8c" stroke-width="1.8"/>
<rect x="525" y="143.8" width="9" height="9" fill="url(#gOr)" stroke="#6a6a8c" stroke-width="1.4"/>
<rect x="534.1" y="165.2" width="9" height="9" fill="url(#gOr)" stroke="#6a6a8c" stroke-width="1.4"/>
<path d="M550.9,166.9 L550.9,175.6 L542.1999999999999,175.6 Z" fill="#000"/>
<rect x="559" y="141" width="1" height="35" fill="#cdcdcd"/>
<rect x="576" y="153" width="20" height="19.2" fill="url(#gSh)" filter="url(#blur1)"/>
<rect x="572.3" y="149.2" width="19.700000000000045" height="19.5" fill="#fff"/>
<rect x="572.3" y="159" width="19.700000000000045" height="9.699999999999989" fill="#e0e0ea"/>
<rect x="573.1999999999999" y="150.1" width="17.900000000000045" height="17.7" fill="none" stroke="#55546e" stroke-width="1.8"/>
<path d="M602.2,166.9 L602.2,175.6 L593.5,175.6 Z" fill="#000"/>
<path d="M612.6,161 L621,169" stroke="#6f6e90" stroke-width="1.8"/>
<path d="M617.1,164.8 L625.4,156.8" stroke="#6f6e90" stroke-width="1.8"/>
<path d="M626.6,143.4 Q621.6,148 622.6,152.6 Q624,157.6 631,158.2 L633,158 L633,149.6 Z" fill="#fdfdfd"/>
<path d="M622.9,153 L633,153 L633,157.9 Q625,158 622.9,153 Z" fill="#22315a"/>
<path d="M626.6,143.4 Q621.6,148 622.6,152.6 Q624,157.6 632,158.2" fill="none" stroke="#6f6e90" stroke-width="1.6"/>
<path d="M626.4,143.4 L632.4,149.4" stroke="#3a3850" stroke-width="1.6"/>
<path d="M631.6,171.6 L628.6,175.6 L631.6,175.6 Z" fill="#2a3560"/>
<rect x="0" y="180" width="72" height="20" fill="#dcdcdc"/>
<rect x="71.5" y="180" width="74" height="20" fill="#cce1fb"/>
<rect x="146.3" y="180" width="18.6" height="20" fill="#dcdcdc"/>
<path d="M150,190 H161 M155.5,184.5 V195.5" stroke="#b6b6b6" stroke-width="1.5"/>
<text x="2.6" y="194.6" font-size="12" font-family="Liberation Sans, Noto Sans CJK SC, sans-serif" fill="#000">欢迎屏幕</text>
<text x="75" y="194.6" font-size="12" font-family="Liberation Sans, Noto Sans CJK SC, sans-serif" fill="#000" textLength="49" lengthAdjust="spacingAndGlyphs">未命名 -1</text>
<rect x="0" y="199.6" width="631" height="1.8" fill="#189cf2"/>
<path d="M6.5,208.5h1.5 M9.5,208.5h1.5 M12.5,208.5h1.5 M8.5,206.5v1.5 M8.5,210v1.5 M8.5,213v1.5 M8.5,216v1" stroke="#000" stroke-width="1"/>
<path d="M10,210 L14.6,214.6 M15,212.4 V215 H12.4" stroke="#000" stroke-width="1" fill="none"/>
<rect x="20" y="215.8" width="1" height="2.2" fill="#585858"/>
<rect x="26" y="216.7" width="1" height="1.3" fill="#585858"/>
<rect x="32" y="216.7" width="1" height="1.3" fill="#585858"/>
<rect x="38" y="216.7" width="1" height="1.3" fill="#585858"/>
<rect x="44" y="216.7" width="1" height="1.3" fill="#585858"/>
<rect x="50" y="213" width="1" height="5" fill="#585858"/>
<text x="43.4" y="211.9" font-size="10.3" textLength="14.4" lengthAdjust="spacingAndGlyphs" font-family="Liberation Sans, Noto Sans CJK SC, sans-serif" fill="#8a8a8a">135</text>
<rect x="57" y="216.7" width="1" height="1.3" fill="#585858"/>
<rect x="63" y="216.7" width="1" height="1.3" fill="#585858"/>
<rect x="69" y="216.7" width="1" height="1.3" fill="#585858"/>
<rect x="75" y="216.7" width="1" height="1.3" fill="#585858"/>
<rect x="81" y="215.8" width="1" height="2.2" fill="#585858"/>
<rect x="87" y="216.7" width="1" height="1.3" fill="#585858"/>
<rect x="93" y="216.7" width="1" height="1.3" fill="#585858"/>
<rect x="100" y="216.7" width="1" height="1.3" fill="#585858"/>
<rect x="106" y="216.7" width="1" height="1.3" fill="#585858"/>
<rect x="112" y="213" width="1" height="5" fill="#585858"/>
<text x="105.4" y="211.9" font-size="10.3" textLength="14.4" lengthAdjust="spacingAndGlyphs" font-family="Liberation Sans, Noto Sans CJK SC, sans-serif" fill="#8a8a8a">130</text>
<rect x="118" y="216.7" width="1" height="1.3" fill="#585858"/>
<rect x="124" y="216.7" width="1" height="1.3" fill="#585858"/>
<rect x="130" y="216.7" width="1" height="1.3" fill="#585858"/>
<rect x="136" y="216.7" width="1" height="1.3" fill="#585858"/>
<rect x="143" y="215.8" width="1" height="2.2" fill="#585858"/>
<rect x="149" y="216.7" width="1" height="1.3" fill="#585858"/>
<rect x="155" y="216.7" width="1" height="1.3" fill="#585858"/>
<rect x="161" y="216.7" width="1" height="1.3" fill="#585858"/>
<rect x="167" y="216.7" width="1" height="1.3" fill="#585858"/>
<rect x="173" y="213" width="1" height="5" fill="#585858"/>
<text x="166.4" y="211.9" font-size="10.3" textLength="14.4" lengthAdjust="spacingAndGlyphs" font-family="Liberation Sans, Noto Sans CJK SC, sans-serif" fill="#8a8a8a">125</text>
<rect x="179" y="216.7" width="1" height="1.3" fill="#585858"/>
<rect x="186" y="216.7" width="1" height="1.3" fill="#585858"/>
<rect x="192" y="216.7" width="1" height="1.3" fill="#585858"/>
<rect x="198" y="216.7" width="1" height="1.3" fill="#585858"/>
<rect x="204" y="215.8" width="1" height="2.2" fill="#585858"/>
<rect x="210" y="216.7" width="1" height="1.3" fill="#585858"/>
<rect x="216" y="216.7" width="1" height="1.3" fill="#585858"/>
<rect x="222" y="216.7" width="1" height="1.3" fill="#585858"/>
<rect x="229" y="216.7" width="1" height="1.3" fill="#585858"/>
<rect x="235" y="213" width="1" height="5" fill="#585858"/>
<text x="228.4" y="211.9" font-size="10.3" textLength="14.4" lengthAdjust="spacingAndGlyphs" font-family="Liberation Sans, Noto Sans CJK SC, sans-serif" fill="#8a8a8a">120</text>
<rect x="241" y="216.7" width="1" height="1.3" fill="#585858"/>
<rect x="247" y="216.7" width="1" height="1.3" fill="#585858"/>
<rect x="253" y="216.7" width="1" height="1.3" fill="#585858"/>
<rect x="259" y="216.7" width="1" height="1.3" fill="#585858"/>
<rect x="265" y="215.8" width="1" height="2.2" fill="#585858"/>
<rect x="272" y="216.7" width="1" height="1.3" fill="#585858"/>
<rect x="278" y="216.7" width="1" height="1.3" fill="#585858"/>
<rect x="284" y="216.7" width="1" height="1.3" fill="#585858"/>
<rect x="290" y="216.7" width="1" height="1.3" fill="#585858"/>
<rect x="296" y="213" width="1" height="5" fill="#585858"/>
<text x="289.4" y="211.9" font-size="10.3" textLength="14.4" lengthAdjust="spacingAndGlyphs" font-family="Liberation Sans, Noto Sans CJK SC, sans-serif" fill="#8a8a8a">115</text>
<rect x="302" y="216.7" width="1" height="1.3" fill="#585858"/>
<rect x="308" y="216.7" width="1" height="1.3" fill="#585858"/>
<rect x="314" y="216.7" width="1" height="1.3" fill="#585858"/>
<rect x="321" y="216.7" width="1" height="1.3" fill="#585858"/>
<rect x="327" y="215.8" width="1" height="2.2" fill="#585858"/>
<rect x="333" y="216.7" width="1" height="1.3" fill="#585858"/>
<rect x="339" y="216.7" width="1" height="1.3" fill="#585858"/>
<rect x="345" y="216.7" width="1" height="1.3" fill="#585858"/>
<rect x="351" y="216.7" width="1" height="1.3" fill="#585858"/>
<rect x="357" y="213" width="1" height="5" fill="#585858"/>
<text x="350.4" y="211.9" font-size="10.3" textLength="14.4" lengthAdjust="spacingAndGlyphs" font-family="Liberation Sans, Noto Sans CJK SC, sans-serif" fill="#8a8a8a">110</text>
<rect x="364" y="216.7" width="1" height="1.3" fill="#585858"/>
<rect x="370" y="216.7" width="1" height="1.3" fill="#585858"/>
<rect x="376" y="216.7" width="1" height="1.3" fill="#585858"/>
<rect x="382" y="216.7" width="1" height="1.3" fill="#585858"/>
<rect x="388" y="215.8" width="1" height="2.2" fill="#585858"/>
<rect x="394" y="216.7" width="1" height="1.3" fill="#585858"/>
<rect x="400" y="216.7" width="1" height="1.3" fill="#585858"/>
<rect x="407" y="216.7" width="1" height="1.3" fill="#585858"/>
<rect x="413" y="216.7" width="1" height="1.3" fill="#585858"/>
<rect x="419" y="213" width="1" height="5" fill="#585858"/>
<text x="412.4" y="211.9" font-size="10.3" textLength="14.4" lengthAdjust="spacingAndGlyphs" font-family="Liberation Sans, Noto Sans CJK SC, sans-serif" fill="#8a8a8a">105</text>
<rect x="425" y="216.7" width="1" height="1.3" fill="#585858"/>
<rect x="431" y="216.7" width="1" height="1.3" fill="#585858"/>
<rect x="437" y="216.7" width="1" height="1.3" fill="#585858"/>
<rect x="443" y="216.7" width="1" height="1.3" fill="#585858"/>
<rect x="450" y="215.8" width="1" height="2.2" fill="#585858"/>
<rect x="456" y="216.7" width="1" height="1.3" fill="#585858"/>
<rect x="462" y="216.7" width="1" height="1.3" fill="#585858"/>
<rect x="468" y="216.7" width="1" height="1.3" fill="#585858"/>
<rect x="474" y="216.7" width="1" height="1.3" fill="#585858"/>
<rect x="480" y="213" width="1" height="5" fill="#585858"/>
<text x="473.4" y="211.9" font-size="10.3" textLength="14.4" lengthAdjust="spacingAndGlyphs" font-family="Liberation Sans, Noto Sans CJK SC, sans-serif" fill="#8a8a8a">100</text>
<rect x="486" y="216.7" width="1" height="1.3" fill="#585858"/>
<rect x="493" y="216.7" width="1" height="1.3" fill="#585858"/>
<rect x="499" y="216.7" width="1" height="1.3" fill="#585858"/>
<rect x="505" y="216.7" width="1" height="1.3" fill="#585858"/>
<rect x="511" y="215.8" width="1" height="2.2" fill="#585858"/>
<rect x="517" y="216.7" width="1" height="1.3" fill="#585858"/>
<rect x="523" y="216.7" width="1" height="1.3" fill="#585858"/>
<rect x="529" y="216.7" width="1" height="1.3" fill="#585858"/>
<rect x="536" y="216.7" width="1" height="1.3" fill="#585858"/>
<rect x="542" y="213" width="1" height="5" fill="#585858"/>
<text x="537.8" y="211.9" font-size="10.3" textLength="9.6" lengthAdjust="spacingAndGlyphs" font-family="Liberation Sans, Noto Sans CJK SC, sans-serif" fill="#8a8a8a">95</text>
<rect x="548" y="216.7" width="1" height="1.3" fill="#585858"/>
<rect x="554" y="216.7" width="1" height="1.3" fill="#585858"/>
<rect x="560" y="216.7" width="1" height="1.3" fill="#585858"/>
<rect x="566" y="216.7" width="1" height="1.3" fill="#585858"/>
<rect x="572" y="215.8" width="1" height="2.2" fill="#585858"/>
<rect x="579" y="216.7" width="1" height="1.3" fill="#585858"/>
<rect x="585" y="216.7" width="1" height="1.3" fill="#585858"/>
<rect x="591" y="216.7" width="1" height="1.3" fill="#585858"/>
<rect x="597" y="216.7" width="1" height="1.3" fill="#585858"/>
<rect x="603" y="213" width="1" height="5" fill="#585858"/>
<text x="598.8" y="211.9" font-size="10.3" textLength="9.6" lengthAdjust="spacingAndGlyphs" font-family="Liberation Sans, Noto Sans CJK SC, sans-serif" fill="#8a8a8a">90</text>
<rect x="609" y="216.7" width="1" height="1.3" fill="#585858"/>
<rect x="615" y="216.7" width="1" height="1.3" fill="#585858"/>
<rect x="622" y="216.7" width="1" height="1.3" fill="#585858"/>
<rect x="628" y="216.7" width="1" height="1.3" fill="#585858"/>
<rect x="15.8" y="223" width="1.2" height="1" fill="#585858"/>
<rect x="15.8" y="229" width="1.2" height="1" fill="#585858"/>
<rect x="15.8" y="235" width="1.2" height="1" fill="#585858"/>
<rect x="15.8" y="242" width="1.2" height="1" fill="#585858"/>
<rect x="12" y="248" width="5" height="1" fill="#585858"/>
<text transform="translate(10.9,254.6) rotate(-90)" font-size="10.3" textLength="14.4" lengthAdjust="spacingAndGlyphs" font-family="Liberation Sans, Noto Sans CJK SC, sans-serif" fill="#8a8a8a">225</text>
<rect x="15.8" y="254" width="1.2" height="1" fill="#585858"/>
<rect x="15.8" y="260" width="1.2" height="1" fill="#585858"/>
<rect x="15.8" y="266" width="1.2" height="1" fill="#585858"/>
<rect x="15.8" y="272" width="1.2" height="1" fill="#585858"/>
<rect x="14.8" y="278" width="2.2" height="1" fill="#585858"/>
<rect x="15.8" y="285" width="1.2" height="1" fill="#585858"/>
<rect x="15.8" y="291" width="1.2" height="1" fill="#585858"/>
<rect x="15.8" y="297" width="1.2" height="1" fill="#585858"/>
<rect x="15.8" y="303" width="1.2" height="1" fill="#585858"/>
<rect x="12" y="309" width="5" height="1" fill="#585858"/>
<text transform="translate(10.9,315.6) rotate(-90)" font-size="10.3" textLength="14.4" lengthAdjust="spacingAndGlyphs" font-family="Liberation Sans, Noto Sans CJK SC, sans-serif" fill="#8a8a8a">220</text>
<rect x="15.8" y="315" width="1.2" height="1" fill="#585858"/>
<rect x="15.8" y="321" width="1.2" height="1" fill="#585858"/>
<rect x="15.8" y="328" width="1.2" height="1" fill="#585858"/>
<rect x="15.8" y="334" width="1.2" height="1" fill="#585858"/>
<rect x="14.8" y="340" width="2.2" height="1" fill="#585858"/>
<rect x="15.8" y="346" width="1.2" height="1" fill="#585858"/>
<rect x="15.8" y="352" width="1.2" height="1" fill="#585858"/>
<rect x="15.8" y="358" width="1.2" height="1" fill="#585858"/>
<rect x="15.8" y="364" width="1.2" height="1" fill="#585858"/>
<rect x="12" y="371" width="5" height="1" fill="#585858"/>
<text transform="translate(10.9,377.6) rotate(-90)" font-size="10.3" textLength="14.4" lengthAdjust="spacingAndGlyphs" font-family="Liberation Sans, Noto Sans CJK SC, sans-serif" fill="#8a8a8a">215</text>
<rect x="15.8" y="377" width="1.2" height="1" fill="#585858"/>
<rect x="15.8" y="383" width="1.2" height="1" fill="#585858"/>
<rect x="15.8" y="389" width="1.2" height="1" fill="#585858"/>
<rect x="15.8" y="395" width="1.2" height="1" fill="#585858"/>
<rect x="14.8" y="401" width="2.2" height="1" fill="#585858"/>
<rect x="15.8" y="407" width="1.2" height="1" fill="#585858"/>
<rect x="15.8" y="414" width="1.2" height="1" fill="#585858"/>
<rect x="15.8" y="420" width="1.2" height="1" fill="#585858"/>
<rect x="15.8" y="426" width="1.2" height="1" fill="#585858"/>
<rect x="12" y="432" width="5" height="1" fill="#585858"/>
<text transform="translate(10.9,438.6) rotate(-90)" font-size="10.3" textLength="14.4" lengthAdjust="spacingAndGlyphs" font-family="Liberation Sans, Noto Sans CJK SC, sans-serif" fill="#8a8a8a">210</text>
<rect x="15.8" y="438" width="1.2" height="1" fill="#585858"/>
<rect x="15.8" y="444" width="1.2" height="1" fill="#585858"/>
<rect x="15.8" y="450" width="1.2" height="1" fill="#585858"/>
<rect x="15.8" y="457" width="1.2" height="1" fill="#585858"/>
<rect x="14.8" y="463" width="2.2" height="1" fill="#585858"/>
<rect x="15.8" y="469" width="1.2" height="1" fill="#585858"/>
<rect x="15.8" y="475" width="1.2" height="1" fill="#585858"/>
<rect x="15.8" y="481" width="1.2" height="1" fill="#585858"/>
<rect x="15.8" y="487" width="1.2" height="1" fill="#585858"/>
<rect x="12" y="493" width="5" height="1" fill="#585858"/>
<text transform="translate(10.9,499.6) rotate(-90)" font-size="10.3" textLength="14.4" lengthAdjust="spacingAndGlyphs" font-family="Liberation Sans, Noto Sans CJK SC, sans-serif" fill="#8a8a8a">205</text>
<rect x="15.8" y="500" width="1.2" height="1" fill="#585858"/>
<rect x="15.8" y="506" width="1.2" height="1" fill="#585858"/>
<rect x="15.8" y="512" width="1.2" height="1" fill="#585858"/>
<rect x="15.8" y="518" width="1.2" height="1" fill="#585858"/>
<rect x="14.8" y="524" width="2.2" height="1" fill="#585858"/>
<rect x="15.8" y="530" width="1.2" height="1" fill="#585858"/>
<rect x="15.8" y="536" width="1.2" height="1" fill="#585858"/>
<rect x="15.8" y="543" width="1.2" height="1" fill="#585858"/>
<rect x="15.8" y="549" width="1.2" height="1" fill="#585858"/>
<rect x="12" y="555" width="5" height="1" fill="#585858"/>
<text transform="translate(10.9,561.6) rotate(-90)" font-size="10.3" textLength="14.4" lengthAdjust="spacingAndGlyphs" font-family="Liberation Sans, Noto Sans CJK SC, sans-serif" fill="#8a8a8a">200</text>
<rect x="15.8" y="561" width="1.2" height="1" fill="#585858"/>
<rect x="15.8" y="567" width="1.2" height="1" fill="#585858"/>
<rect x="15.8" y="573" width="1.2" height="1" fill="#585858"/>
<rect x="15.8" y="579" width="1.2" height="1" fill="#585858"/>
<rect x="14.8" y="585" width="2.2" height="1" fill="#585858"/>
<path d="M297.5,248.4 C361.26,248.4 426.3,300.72 426.3,352.0 C426.3,406.75 363.98,457.7 297.0,457.7 C224.76,457.7 166.2,410.83 166.2,353.0 C166.2,294.42 223.97,248.4 297.5,248.4 Z" fill="#ffcc99" stroke="#1a1210" stroke-width="2.5"/>
<clipPath id="capclip"><path d="M297.5,248.4 C361.26,248.4 426.3,300.72 426.3,352.0 C426.3,406.75 363.98,457.7 297.0,457.7 C224.76,457.7 166.2,410.83 166.2,353.0 C166.2,294.42 223.97,248.4 297.5,248.4 Z"/></clipPath>
<g clip-path="url(#capclip)"><path d="M180.00,447.49 C258.33,359.03 336.67,388.23 415.00,436.38 L415,470 L180,470 Z" fill="#ff9966" stroke="#1a1210" stroke-width="2.5"/></g>
<path d="M297.5,248.4 C361.26,248.4 426.3,300.72 426.3,352.0 C426.3,406.75 363.98,457.7 297.0,457.7 C224.76,457.7 166.2,410.83 166.2,353.0 C166.2,294.42 223.97,248.4 297.5,248.4 Z" fill="none" stroke="#1a1210" stroke-width="2.5"/>
<path d="M281.5,391.2 C269.4,451.2 263.3,483 263.3,513 C263.3,537.2 278.8,556.9 298,556.9 C317.2,556.9 332.6,536.3 332.6,510.8 C332.6,480 329.2,453.1 317.1,393.1" fill="#ffcc99" stroke="#1a1210" stroke-width="2.5" stroke-linejoin="round"/>
<g clip-path="url(#capclip)"><path d="M180.00,447.49 C258.33,359.03 336.67,388.23 415.00,436.38" fill="none" stroke="#1a1210" stroke-width="2.5"/></g>
<g fill="#808080" fill-opacity="0.17" font-family="Liberation Sans, Noto Sans CJK SC, sans-serif">
<text transform="translate(243,371) rotate(-45)" font-size="38" font-weight="500" letter-spacing="6.4">软件自学网</text>
<text transform="translate(249,385) rotate(-44)" font-size="17.5" font-weight="700" letter-spacing="5">WWW.RJZXW.COM</text>
</g>
</svg></body></html>
